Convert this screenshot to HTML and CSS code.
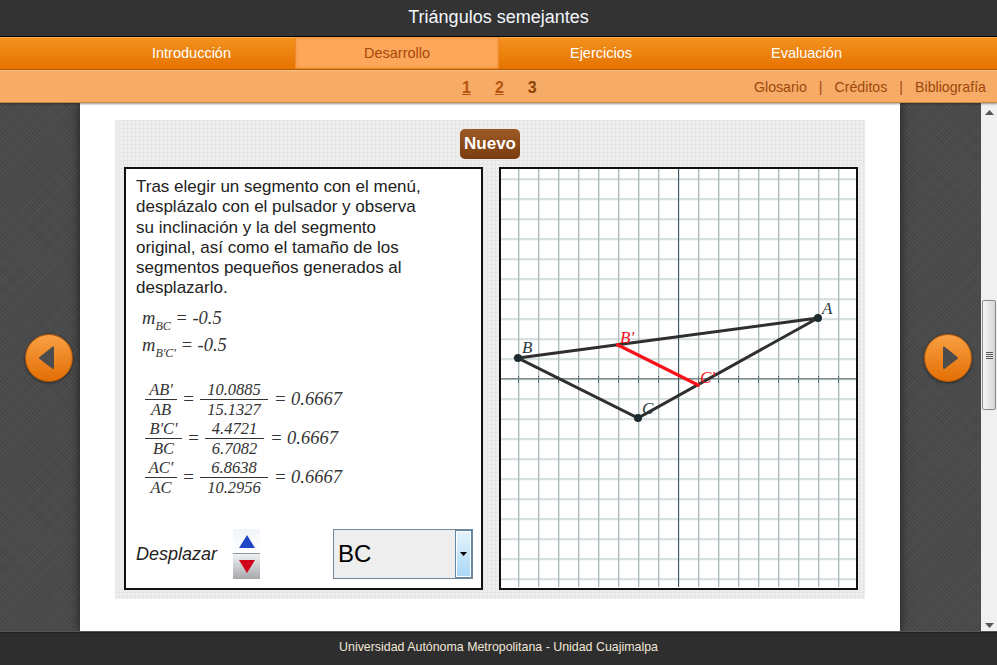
FILE: index.html
```html
<!DOCTYPE html>
<html lang="es">
<head>
<meta charset="utf-8">
<title>Triángulos semejantes</title>
<link rel="stylesheet" href="styles.css">
</head>
<body>
<header class="title-bar">Triángulos semejantes</header>
<nav class="main-nav">
  <a class="nav-item">Introducción</a>
  <a class="nav-item active">Desarrollo</a>
  <a class="nav-item">Ejercicios</a>
  <a class="nav-item">Evaluación</a>
</nav>
<div class="sub-nav">
  <div class="pages"><a class="page link">1</a><a class="page link">2</a><span class="page">3</span></div>
  <div class="extras"><a>Glosario</a><i>|</i><a>Créditos</a><i>|</i><a>Bibliografía</a></div>
</div>
<main class="stage">
  <div class="gutter gutter-left">
    <button class="arrow" aria-label="Anterior"><svg viewBox="0 0 48 48" width="48" height="48"><path d="M15 24 L28 13.500 V34 Z" class="arrow-glyph"/></svg></button>
  </div>
  <div class="sheet">
    <section class="panel">
      <div class="panel-top"><button class="new-btn">Nuevo</button></div>
      <div class="columns">
        <div class="box text-box">
          <p class="intro">Tras elegir un segmento con el menú,<br>desplázalo con el pulsador y observa<br>su inclinación y la del segmento<br>original, así como el tamaño de los<br>segmentos pequeños generados al<br>desplazarlo.</p>
          <div class="slopes">
            <div class="slope"><span class="m">m<sub>BC</sub></span> = -0.5</div>
            <div class="slope"><span class="m">m<sub>B'C'</sub></span> = -0.5</div>
          </div>
          <div class="ratios">
            <div class="ratio"><span class="frac w1"><span>AB'</span><span>AB</span></span><span class="eq">=</span><span class="frac w2"><span>10.0885</span><span>15.1327</span></span><span class="res">= 0.6667</span></div>
            <div class="ratio"><span class="frac w3"><span>B'C'</span><span>BC</span></span><span class="eq">=</span><span class="frac w4"><span>4.4721</span><span>6.7082</span></span><span class="res">= 0.6667</span></div>
            <div class="ratio"><span class="frac w1"><span>AC'</span><span>AC</span></span><span class="eq">=</span><span class="frac w2"><span>6.8638</span><span>10.2956</span></span><span class="res">= 0.6667</span></div>
          </div>
          <div class="controls">
            <span class="move-label">Desplazar</span>
            <div class="stepper">
              <div class="step step-up"><svg width="18" height="13" viewBox="0 0 18 13"><path d="M9 0 L17 13 H1 Z" fill="#2146c7"/></svg></div>
              <div class="step step-down"><svg width="18" height="13" viewBox="0 0 18 13"><path d="M1 0 H17 L9 13 Z" fill="#d0021b"/></svg></div>
            </div>
            <div class="select"><span class="select-value">BC</span><span class="select-btn"><svg width="7" height="4" viewBox="0 0 7 4"><path d="M0 0 H7 L3.500 4 Z" fill="#000"/></svg></span></div>
          </div>
        </div>
        <div class="box graph-box">
          <svg class="graph" viewBox="501 169 355 418" width="355" height="418" aria-label="Triángulo ABC">
            <defs>
              <pattern id="gridv" x="498" y="0" width="20" height="20" patternUnits="userSpaceOnUse"><rect x="0" width="1.400" height="20" fill="#aebcbe"/></pattern>
              <pattern id="gridh" x="0" y="178.300" width="20" height="20" patternUnits="userSpaceOnUse"><rect y="0" width="20" height="1.600" fill="#c8d4d6"/></pattern>
              <pattern id="ticksx" x="498" y="376" width="20" height="7" patternUnits="userSpaceOnUse"><rect x="0" width="1" height="7" fill="#5a6d70"/></pattern>
            </defs>
            <rect x="501" y="169" width="355" height="418" fill="url(#gridh)"/>
            <rect x="501" y="169" width="355" height="418" fill="url(#gridv)"/>
            <rect x="501" y="376" width="355" height="7" fill="url(#ticksx)"/>
            <line x1="501" y1="378.800" x2="856" y2="378.800" stroke="#7d8c8e" stroke-width="1.400"/>
            <line x1="678.500" y1="169" x2="678.500" y2="587" stroke="#3f5a60" stroke-width="1"/>
            <path d="M518 358 L818 318 L638 418 Z" fill="none" stroke="#2f2f2f" stroke-width="3" stroke-linecap="round"/>
            <line x1="618" y1="345" x2="698" y2="385" stroke="#f5131b" stroke-width="3.400"/>
            <g fill="#1c2b30">
              <circle cx="818" cy="318" r="4"/><circle cx="518" cy="358" r="4"/><circle cx="638" cy="418" r="4"/>
            </g>
            <circle cx="618" cy="345" r="2" fill="#f5131b"/><circle cx="698" cy="385" r="2" fill="#f5131b"/>
            <g class="pt-label">
              <text x="822" y="314">A</text><text x="522" y="353">B</text><text x="642" y="414">C</text>
            </g>
            <g class="pt-label red">
              <text x="620" y="343">B'</text><text x="700" y="383">C'</text>
            </g>
          </svg>
        </div>
      </div>
    </section>
  </div>
  <div class="gutter gutter-right">
    <button class="arrow" aria-label="Siguiente"><svg viewBox="0 0 48 48" width="48" height="48"><path d="M20 13.500 L33 24 L20 34 Z" class="arrow-glyph"/></svg></button>
  </div>
  <div class="scrollbar">
    <svg class="sb-arrow" width="9" height="5" viewBox="0 0 9 5"><path d="M4.500 0 L9 5 H0 Z" fill="#555"/></svg>
    <div class="sb-track"><div class="sb-thumb"><span class="grip"></span></div></div>
    <svg class="sb-arrow" width="9" height="5" viewBox="0 0 9 5"><path d="M0 0 H9 L4.500 5 Z" fill="#555"/></svg>
  </div>
</main>
<footer class="footer">Universidad Autónoma Metropolitana - Unidad Cuajimalpa</footer>
</body>
</html>
```
FILE: styles.css
```css
* { box-sizing: border-box; }
html, body { margin: 0; height: 100%; }
body {
  display: flex;
  flex-direction: column;
  height: 665px;
  overflow: hidden;
  font-family: "Liberation Sans", Arial, sans-serif;
  background: #444;
}
.title-bar {
  flex: 0 0 37px;
  background: #333;
  border-bottom: 1px solid #000;
  color: #f2f6fb;
  font-size: 18px;
  line-height: 34px;
  text-align: center;
}
.main-nav {
  flex: 0 0 33px;
  display: grid;
  grid-template-columns: 207px 204px 204px 207px;
  padding-left: 88px;
  background: linear-gradient(#f4921f, #e67300);
  border-bottom: 1px solid #b85c00;
  box-shadow: inset 0 1px 0 #f9a84a;
}
.nav-item {
  color: #fff;
  font-size: 14.500px;
  line-height: 32px;
  text-align: center;
}
.nav-item.active {
  background: #fca75a;
  color: #a8480a;
  box-shadow: inset 1px 0 #ee8a2c, inset -1px 0 #ee8a2c, inset 0 -1px #ee8a2c, inset 0 0 4px #f08c30;
}
.sub-nav {
  flex: 0 0 33px;
  position: relative;
  z-index: 2;
  display: flex;
  justify-content: flex-end;
  align-items: center;
  padding-right: 11px;
  background: #f6ab67;
  border-top: 1px solid #fac08a;
  border-bottom: 1px solid #cf8440;
  box-shadow: 0 1px 2px rgba(0, 0, 0, .4);
  color: #a0480c;
}
.pages {
  position: absolute;
  left: 462px;
  top: 7px;
  display: flex;
  gap: 24px;
  font-size: 16px;
  font-weight: bold;
  line-height: 20px;
}
.page { color: #8f4208; }
.page.link { color: #b5530e; text-decoration: underline; }
.extras {
  display: flex;
  gap: 12px;
  font-size: 14.200px;
}
.extras i { font-style: normal; }
.stage {
  flex: 1;
  display: flex;
  min-height: 0;
  background-color: #4a4a4a;
  background-image:
    repeating-linear-gradient(45deg, rgba(0, 0, 0, .06) 0 1px, transparent 1px 3px),
    repeating-linear-gradient(-45deg, rgba(255, 255, 255, .03) 0 1px, transparent 1px 3px);
}
.gutter {
  display: flex;
  align-items: center;
  padding-bottom: 18px;
}
.gutter-left { flex: 0 0 80px; padding-left: 25px; }
.gutter-right { flex: 0 0 81px; padding-left: 24px; }
.arrow {
  width: 48px;
  height: 48px;
  padding: 0;
  border: 1px solid #b4560a;
  border-radius: 50%;
  background: linear-gradient(#f9a044, #e36f04);
  box-shadow: 0 1px 3px rgba(0, 0, 0, .5);
  display: block;
}
.arrow svg { display: block; margin: -1px; }
.arrow-glyph {
  fill: #4c4c4c;
  stroke: #4c4c4c;
  stroke-width: 2;
  stroke-linejoin: round;
}
.sheet {
  flex: 0 0 820px;
  background: #fff;
  padding: 17px 35px 0;
  box-shadow: 0 0 10px rgba(0, 0, 0, .6);
}
.panel {
  height: 479px;
  padding: 9px 7px 0 9px;
  background-color: #eee;
  background-image:
    linear-gradient(#e6e6e6 1px, transparent 1px),
    linear-gradient(90deg, #e6e6e6 1px, transparent 1px);
  background-size: 4px 4px;
}
.panel-top {
  display: flex;
  justify-content: center;
  padding-right: 2px;
}
.new-btn {
  width: 60px;
  height: 30px;
  padding: 0;
  border: 0;
  border-radius: 5px;
  background: linear-gradient(#9c5a24, #7a3c10);
  color: #fff;
  font: bold 17px "Liberation Sans", Arial, sans-serif;
}
.columns {
  display: flex;
  gap: 16px;
  margin-top: 8px;
}
.box {
  flex: 0 0 359px;
  height: 423px;
  background: #fff;
  border: 2px solid #111;
}
.graph { display: block; }
.pt-label text {
  font: italic 17px "Liberation Serif", serif;
  fill: #2b3a40;
}
.pt-label.red text { fill: #f5131b; }
.text-box {
  display: flex;
  flex-direction: column;
  padding: 8px 8px 0 10px;
  color: #222;
}
.intro {
  margin: 0;
  font-size: 17px;
  line-height: 20.300px;
}
.slopes {
  margin: 8px 0 0 6px;
  font: italic 18.500px "Liberation Serif", serif;
  color: #333;
}
.slope { height: 27px; line-height: 22px; }
.m sub { font-size: 12px; vertical-align: -6px; line-height: 0; }
.ratios {
  margin: 19px 0 0 9px;
  font: italic 16.500px "Liberation Serif", serif;
  color: #333;
}
.ratio {
  display: flex;
  align-items: center;
  height: 39px;
}
.frac {
  display: flex;
  flex-direction: column;
  text-align: center;
  line-height: 19px;
}
.frac span:first-child { border-bottom: 1px solid #333; }
.w1 { width: 32px; }
.w2 { width: 68px; }
.w3 { width: 37px; }
.w4 { width: 59px; }
.eq { width: 23px; text-align: center; font-size: 19px; }
.res { margin-left: 6px; font-size: 18.500px; }
.controls {
  display: flex;
  align-items: center;
  margin-top: 32px;
}
.move-label {
  width: 97px;
  padding-top: 2px;
  font-size: 18px;
  font-style: italic;
}
.stepper {
  width: 27px;
  height: 50px;
  display: flex;
  flex-direction: column;
}
.step {
  flex: 1;
  display: flex;
  justify-content: center;
  align-items: center;
}
.step-up { background: linear-gradient(#f1f5f9, #fff); border-bottom: 1px solid #8e959c; }
.step-down { background: linear-gradient(#eff1f3, #a6a8ac); }
.select {
  display: flex;
  justify-content: space-between;
  width: 140px;
  height: 50px;
  margin-left: 73px;
  background: #eee;
  border: 1px solid #75889c;
}
.select-value {
  padding-left: 4px;
  font-size: 24px;
  line-height: 48px;
  color: #000;
}
.select-btn {
  width: 17px;
  display: flex;
  align-items: center;
  justify-content: center;
  background: linear-gradient(#e6f3fc, #a9d8f7);
  border: 1px solid #5f88a8;
  outline: 1px solid #fff;
  outline-offset: -2px;
}
.scrollbar {
  flex: 0 0 16px;
  display: flex;
  flex-direction: column;
  align-items: center;
  background: #f0f0f0;
  padding: 7px 0 3px;
}
.sb-track {
  flex: 1;
  width: 100%;
  padding: 0 1px;
}
.sb-thumb {
  display: flex;
  align-items: center;
  justify-content: center;
  height: 110px;
  margin-top: 185px;
  border: 1px solid #8a8a8a;
  border-radius: 2px;
  background: linear-gradient(90deg, #f6f6f6, #d6d6d6);
}
.grip {
  width: 7px;
  height: 7px;
  background: repeating-linear-gradient(#555 0 1px, #eee 1px 2px);
}
.footer {
  flex: 0 0 34px;
  background: #2e2e2e;
  border-top: 1px solid #555;
  box-shadow: inset 0 1px 0 #222;
  color: #f0e6d8;
  font-size: 12.400px;
  line-height: 31px;
  text-align: center;
}
```
